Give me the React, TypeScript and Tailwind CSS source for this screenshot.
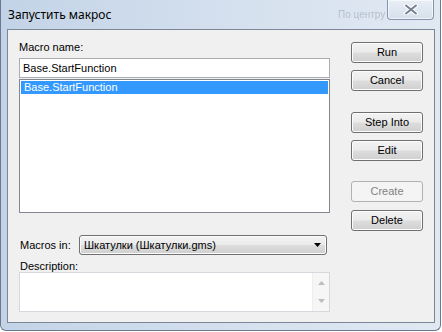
const btnBase =
  "h-[21px] w-[72px] rounded-[3px] border text-[11px] leading-[13px] flex items-center justify-center";
const btnOn =
  btnBase +
  " border-[#707070] text-black bg-[linear-gradient(to_bottom,#f2f2f2_0%,#ebebeb_48%,#dddddd_52%,#cfcfcf_100%)] shadow-[inset_0_0_0_1px_#fcfcfc]";
const btnOff = btnBase + " border-[#adb2b5] text-[#838383] bg-[#f4f4f4]";

function Btn({ label, disabled }: { label: string; disabled?: boolean }) {
  return <div className={disabled ? btnOff : btnOn}>{label}</div>;
}

export default function App() {
  return (
    <div className="w-[442px] h-[332px] bg-white">
      <div className="w-[441px] h-[331px] rounded-b-[6px] border border-t-0 border-[#6a7a8e] bg-[linear-gradient(to_right,#c3d3e7,#d7e2ef_60%,#e0e8f2)] font-['Liberation_Sans',Arial,sans-serif]">
        {/* title bar */}
        <div className="relative h-[29px] flex items-center pl-[7px]">
          <span className="text-[12px] text-black font-['Noto_Sans',sans-serif] leading-[16px]">
            Запустить макрос
          </span>
          <span className="absolute left-[337px] top-[9px] w-[50px] overflow-hidden whitespace-nowrap text-[10px] leading-[12px] text-[#b4c0cd] blur-[0.7px]">
            По центру
          </span>
          <div className="absolute left-[386px] top-0 w-[47px] h-[20px] rounded-b-[4px] border border-t-0 border-[#8596ac] bg-[linear-gradient(to_bottom,#e8eef6,#d6e0ec)] shadow-[inset_0_0_0_1px_rgba(255,255,255,0.6)] flex items-center justify-center">
            <svg width="14" height="11" viewBox="0 0 14 11">
              <path
                d="M2 1.5 L12 9.5 M12 1.5 L2 9.5"
                stroke="#ffffff"
                strokeWidth="4"
                strokeLinecap="round"
              />
              <path
                d="M2 1.5 L12 9.5 M12 1.5 L2 9.5"
                stroke="#75808f"
                strokeWidth="2"
                strokeLinecap="round"
              />
            </svg>
          </div>
        </div>

        {/* client area */}
        <div className="ml-[6px] w-[428px] h-[294px] border border-[#7b8797] bg-[#f0f0f0] flex text-[11px] leading-[13px] text-black">
          <div className="w-[311px] ml-[11px] pt-[11px] flex flex-col">
            <div className="h-[13px] mb-[4px]">Macro name:</div>
            <div className="h-[20px] border border-[#abadb3] bg-white pl-[3px] flex items-center">
              Base.StartFunction
            </div>
            <div className="mt-[1px] h-[134px] border border-[#828790] bg-white p-[1px]">
              <div className="h-[13px] bg-[#3399ff] text-white pl-[3px]">Base.StartFunction</div>
            </div>
            <div className="mt-[22px] h-[20px] flex items-center">
              <div className="w-[60px] pl-[1px]">Macros in:</div>
              <div className="w-[248px] h-[20px] rounded-[3px] border border-[#707070] bg-[linear-gradient(to_bottom,#f2f2f2_0%,#ebebeb_48%,#dddddd_52%,#cfcfcf_100%)] shadow-[inset_0_0_0_1px_#fcfcfc] flex items-center pl-[4px] pr-[5px]">
                <span className="flex-1">Шкатулки (Шкатулки.gms)</span>
                <svg width="7" height="4" viewBox="0 0 7 4">
                  <path d="M0 0 H7 L3.5 4 Z" fill="#000" />
                </svg>
              </div>
            </div>
            <div className="mt-[6px] h-[11px] leading-[11px] pl-[1px]">Description:</div>
            <div className="h-[40px] border border-[#d5d9de] bg-white flex">
              <div className="flex-1" />
              <div className="w-[17px] bg-[#f6f6f6] border-l border-[#eeeeee] flex flex-col items-center justify-between py-[8px]">
                <svg width="7" height="4" viewBox="0 0 7 4">
                  <path d="M0 4 H7 L3.5 0 Z" fill="#bdbdbd" />
                </svg>
                <svg width="7" height="4" viewBox="0 0 7 4">
                  <path d="M0 0 H7 L3.5 4 Z" fill="#bdbdbd" />
                </svg>
              </div>
            </div>
          </div>

          <div className="ml-[21px] pt-[12px] flex flex-col">
            <Btn label="Run" />
            <div className="mt-[7px]">
              <Btn label="Cancel" />
            </div>
            <div className="mt-[21px]">
              <Btn label="Step Into" />
            </div>
            <div className="mt-[7px]">
              <Btn label="Edit" />
            </div>
            <div className="mt-[20px]">
              <Btn label="Create" disabled />
            </div>
            <div className="mt-[8px]">
              <Btn label="Delete" />
            </div>
          </div>
        </div>
      </div>
    </div>
  );
}
